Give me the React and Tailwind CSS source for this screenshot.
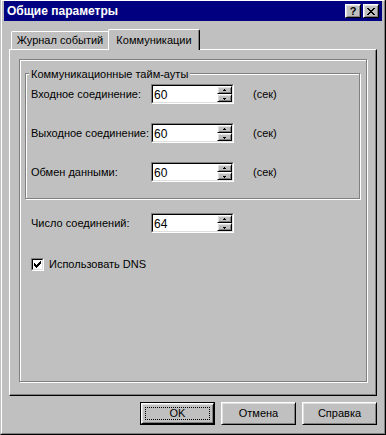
const raised =
  'border-t border-l border-t-white border-l-white border-r border-b border-r-black border-b-black shadow-[inset_1px_1px_0_#dfdfdf,inset_-1px_-1px_0_#808080]';

function CloseGlyph() {
  const rows = [
    [0, 6], [1, 5], [2], [3], [2], [1, 5], [0, 6],
  ];
  return (
    <svg width="8" height="7" viewBox="0 0 8 7" shapeRendering="crispEdges">
      {rows.map((xs, y) =>
        xs.length === 1 ? (
          <rect key={y} x={xs[0]} y={y} width={y === 3 ? 2 : 4} height="1" fill="#000" />
        ) : (
          xs.map((x) => <rect key={`${y}-${x}`} x={x} y={y} width="2" height="1" fill="#000" />)
        )
      )}
    </svg>
  );
}

function Arrow({ up }) {
  return (
    <svg width="5" height="3" viewBox="0 0 5 3" shapeRendering="crispEdges">
      {up ? (
        <>
          <rect x="2" y="0" width="1" height="1" fill="#000" />
          <rect x="1" y="1" width="3" height="1" fill="#000" />
        </>
      ) : (
        <>
          <rect x="1" y="1" width="3" height="1" fill="#000" />
          <rect x="2" y="2" width="1" height="1" fill="#000" />
        </>
      )}
    </svg>
  );
}

function SpinField({ value }) {
  return (
    <div className="flex h-[20px] w-[83px] border-t border-l border-t-[#808080] border-l-[#808080] border-r border-b border-r-white border-b-white">
      <div className="flex flex-1 border-t border-l border-t-black border-l-black border-r border-b border-r-[#dfdfdf] border-b-[#dfdfdf] bg-white">
        <span className="flex-1 pl-[1px] pt-[2px] text-[12px] leading-[14px]">{value}</span>
        <div className="flex w-[15px] flex-col bg-[#c0c0c0]">
          <div className={`flex h-[8px] items-center justify-center ${raised}`}>
            <Arrow up />
          </div>
          <div className={`flex h-[8px] items-center justify-center ${raised}`}>
            <Arrow />
          </div>
        </div>
      </div>
    </div>
  );
}

function Row({ label, value, unit }) {
  return (
    <div className="flex h-[20px] items-center">
      <span className="w-[120px]">{label}</span>
      <SpinField value={value} />
      {unit && <span className="ml-[19px]">{unit}</span>}
    </div>
  );
}

export default function App() {
  return (
    <div className="h-[435px] w-[386px] border-l border-l-[#c0c0c0] border-r border-b border-r-black border-b-black bg-[#c0c0c0] font-['Liberation_Sans',Arial,sans-serif] text-[11px] text-black">
      <div className="flex h-full flex-col border-t border-l border-t-white border-l-white border-r border-b border-r-[#808080] border-b-[#808080] px-[2px] pb-[2px]">
        <div className="flex h-[20px] items-center bg-[#000080] pl-[3px] pr-[3px]">
          <span className="flex-1 text-[12px] font-bold text-white">Общие параметры</span>
          <div className="flex gap-[2px]">
            <div className={`flex h-[14px] w-[16px] items-center justify-center bg-[#c0c0c0] text-[11px] font-bold leading-none ${raised}`}>?</div>
            <div className={`flex h-[14px] w-[16px] items-center justify-center bg-[#c0c0c0] ${raised}`}>
              <CloseGlyph />
            </div>
          </div>
        </div>

        <div className="mx-[5px] mt-[8px]">
          <div className="flex h-[20px] items-end pl-[2px]">
            <div className="flex h-[18px] w-[97px] items-center justify-center rounded-tl-[2px] border-t border-l border-t-white border-l-white">
              Журнал событий
            </div>
            <div className="relative z-10 -mb-px flex h-[21px] w-[92px] items-start justify-center rounded-t-[2px] border-t border-l border-r border-t-white border-l-white border-r-black bg-[#c0c0c0] pt-[2px] shadow-[inset_-1px_0_0_#808080]">
              Коммуникации
            </div>
          </div>

          <div className="h-[347px] border-t border-l border-t-white border-l-white border-r border-b border-r-black border-b-black p-[9px] shadow-[inset_-1px_-1px_0_#808080]">
            <div className="h-[323px] border border-[#808080] pl-[5px] pt-[13px] shadow-[inset_1px_1px_0_white,1px_1px_0_white]">
              <div className="relative h-[126px] w-[335px] border border-[#808080] pl-[5px] pt-[10px] shadow-[inset_1px_1px_0_white,1px_1px_0_white]">
                <span className="absolute -top-[8px] left-[3px] bg-[#c0c0c0] px-[2px]">Коммуникационные тайм-ауты</span>
                <div className="flex flex-col gap-[19px]">
                  <Row label="Входное соединение:" value="60" unit="(сек)" />
                  <Row label="Выходное соединение:" value="60" unit="(сек)" />
                  <Row label="Обмен данными:" value="60" unit="(сек)" />
                </div>
              </div>

              <div className="mt-[14px] pl-[6px]">
                <Row label="Число соединений:" value="64" />
              </div>

              <div className="mt-[25px] flex h-[13px] items-center pl-[6px]">
                <div className="flex h-[13px] w-[13px] border-t border-l border-t-[#808080] border-l-[#808080] border-r border-b border-r-white border-b-white">
                  <div className="flex flex-1 items-center justify-center border-t border-l border-t-black border-l-black border-r border-b border-r-[#dfdfdf] border-b-[#dfdfdf] bg-white">
                    <svg width="7" height="7" viewBox="0 0 7 7" shapeRendering="crispEdges">
                      <path d="M0 2h1v3H0zM1 3h1v3H1zM2 4h1v3H2zM3 3h1v3H3zM4 2h1v3H4zM5 1h1v3H5zM6 0h1v3H6z" fill="#000" />
                    </svg>
                  </div>
                </div>
                <span className="ml-[5px]">Использовать DNS</span>
              </div>
            </div>
          </div>
        </div>

        <div className="mr-[5px] mt-[6px] flex justify-end gap-[6px]">
          <div className="h-[23px] w-[75px] border border-black">
            <div className={`h-full w-full p-[3px] ${raised}`}>
              <div className="flex h-full w-full items-center justify-center border border-dotted border-black">OK</div>
            </div>
          </div>
          <div className={`flex h-[23px] w-[75px] items-center justify-center ${raised}`}>Отмена</div>
          <div className={`flex h-[23px] w-[75px] items-center justify-center ${raised}`}>Справка</div>
        </div>
      </div>
    </div>
  );
}
